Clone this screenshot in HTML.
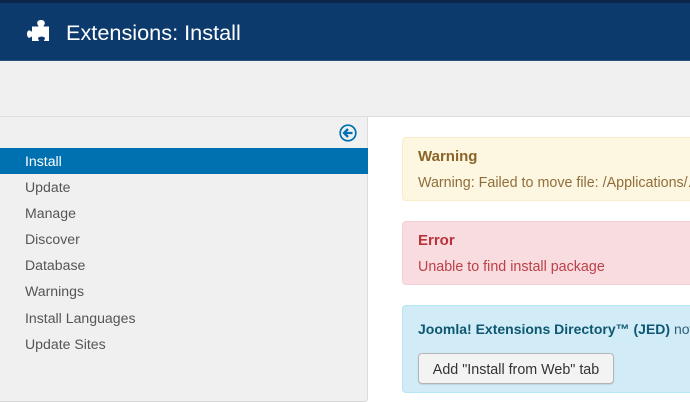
<!DOCTYPE html>
<html><head><meta charset="utf-8"><style>
*{box-sizing:border-box;margin:0;padding:0}
html,body{width:690px;height:402px;overflow:hidden;background:#fff;font-family:"Liberation Sans",sans-serif}
.a{position:absolute;white-space:nowrap}
#top{left:0;top:0;width:690px;height:61px;background:#0c3a6d;border-top:3px solid #0a2548;border-bottom:1px solid #2a5080}
#bar{left:0;top:61px;width:690px;height:56px;background:#f0f0f0;border-bottom:1px solid #dedede}
#side{left:0;top:117px;width:368px;height:285px;background:#f0f0f0;border-right:1px solid #dcdcdc;border-bottom:1px solid #d8d8d8;border-bottom-right-radius:3px}
#sel{left:0;top:148px;width:368px;height:26px;background:#0071b0}
.m{left:25px;font-size:14.1px;line-height:26px;color:#555}
.box{left:402px;width:300px;border-radius:4px;border:1px solid}
.t{left:418px;line-height:20px}
#btn{left:418px;top:353px;width:196px;height:31px;background:#f3f3f3;border:1px solid #b4b4b4;border-radius:4px;font-size:14.3px;line-height:32px;text-align:center;color:#333;box-shadow:0 1px 1px rgba(0,0,0,.1)}
</style></head><body>
<div class="a" id="top"></div>
<svg class="a" style="left:27px;top:20px" width="23" height="23" viewBox="0 0 23 23"><path fill="#fff" d="M5 6.500H11C11.500 6.500 11.600 6 11.200 5.500C10.500 4.700 10.200 4 10.200 3C10.200 1 12 0 14 0S17.800 1 17.800 3C17.800 4 17.500 4.700 16.800 5.500C16.400 6 16.500 6.500 17 6.500H22V21H17.500C17 21 16.900 20.500 17.200 20C17.700 19.300 18 18.800 18 18.300C18 17.200 16 16.600 14.500 16.600S11 17.200 11 18.300C11 18.800 11.300 19.300 11.800 20C12.100 20.500 12 21 11.500 21H5V17C5 16.500 4.500 16.500 4 16.900C3.300 17.500 2.800 17.800 2.200 17.800C1 17.800 0 16 0 14S1 10.400 2.200 10.400C2.800 10.400 3.300 10.700 4 11.300C4.500 11.700 5 11.700 5 11.200Z"/></svg>
<div class="a" style="left:66px;top:19px;font-size:21.7px;line-height:28px;color:#fff">Extensions: Install</div>
<div class="a" id="bar"></div>
<div class="a" id="side"></div>
<svg class="a" style="left:339px;top:124px" width="18" height="18" viewBox="0 0 18 18" fill="none" stroke="#0071b0"><circle cx="9" cy="9" r="7.800" stroke-width="1.700"/><path d="M13.500 9H5.500M9 5L5 9l4 4" stroke-width="2.300"/></svg>
<div class="a" id="sel"></div>
<div class="a m" style="top:148px;color:#fff">Install</div>
<div class="a m" style="top:174px">Update</div>
<div class="a m" style="top:200px">Manage</div>
<div class="a m" style="top:226px">Discover</div>
<div class="a m" style="top:252px">Database</div>
<div class="a m" style="top:278px">Warnings</div>
<div class="a m" style="top:305px">Install Languages</div>
<div class="a m" style="top:331px">Update Sites</div>
<div class="a box" style="top:137px;height:64px;background:#fdf6e0;border-color:#faeccb"></div>
<div class="a t" style="top:147px;font-size:15px;font-weight:bold;color:#8a6428">Warning</div>
<div class="a t" style="top:173px;font-size:14.300px;color:#8f6e3c">Warning: Failed to move file: /Applications/...</div>
<div class="a box" style="top:221px;height:64px;background:#f8dcdf;border-color:#f5d0d5"></div>
<div class="a t" style="top:231px;font-size:15px;font-weight:bold;color:#b8333a">Error</div>
<div class="a t" style="top:257px;font-size:14.300px;color:#bd4048">Unable to find install package</div>
<div class="a box" style="top:305px;height:88px;background:#d2ecf7;border-color:#b5e6f1"></div>
<div class="a t" style="top:319px;font-size:14px;color:#2c5f78"><b style="color:#0d5771">Joomla! Extensions Directory™ (JED)</b> now</div>
<div class="a" id="btn">Add "Install from Web" tab</div>
</body></html>
